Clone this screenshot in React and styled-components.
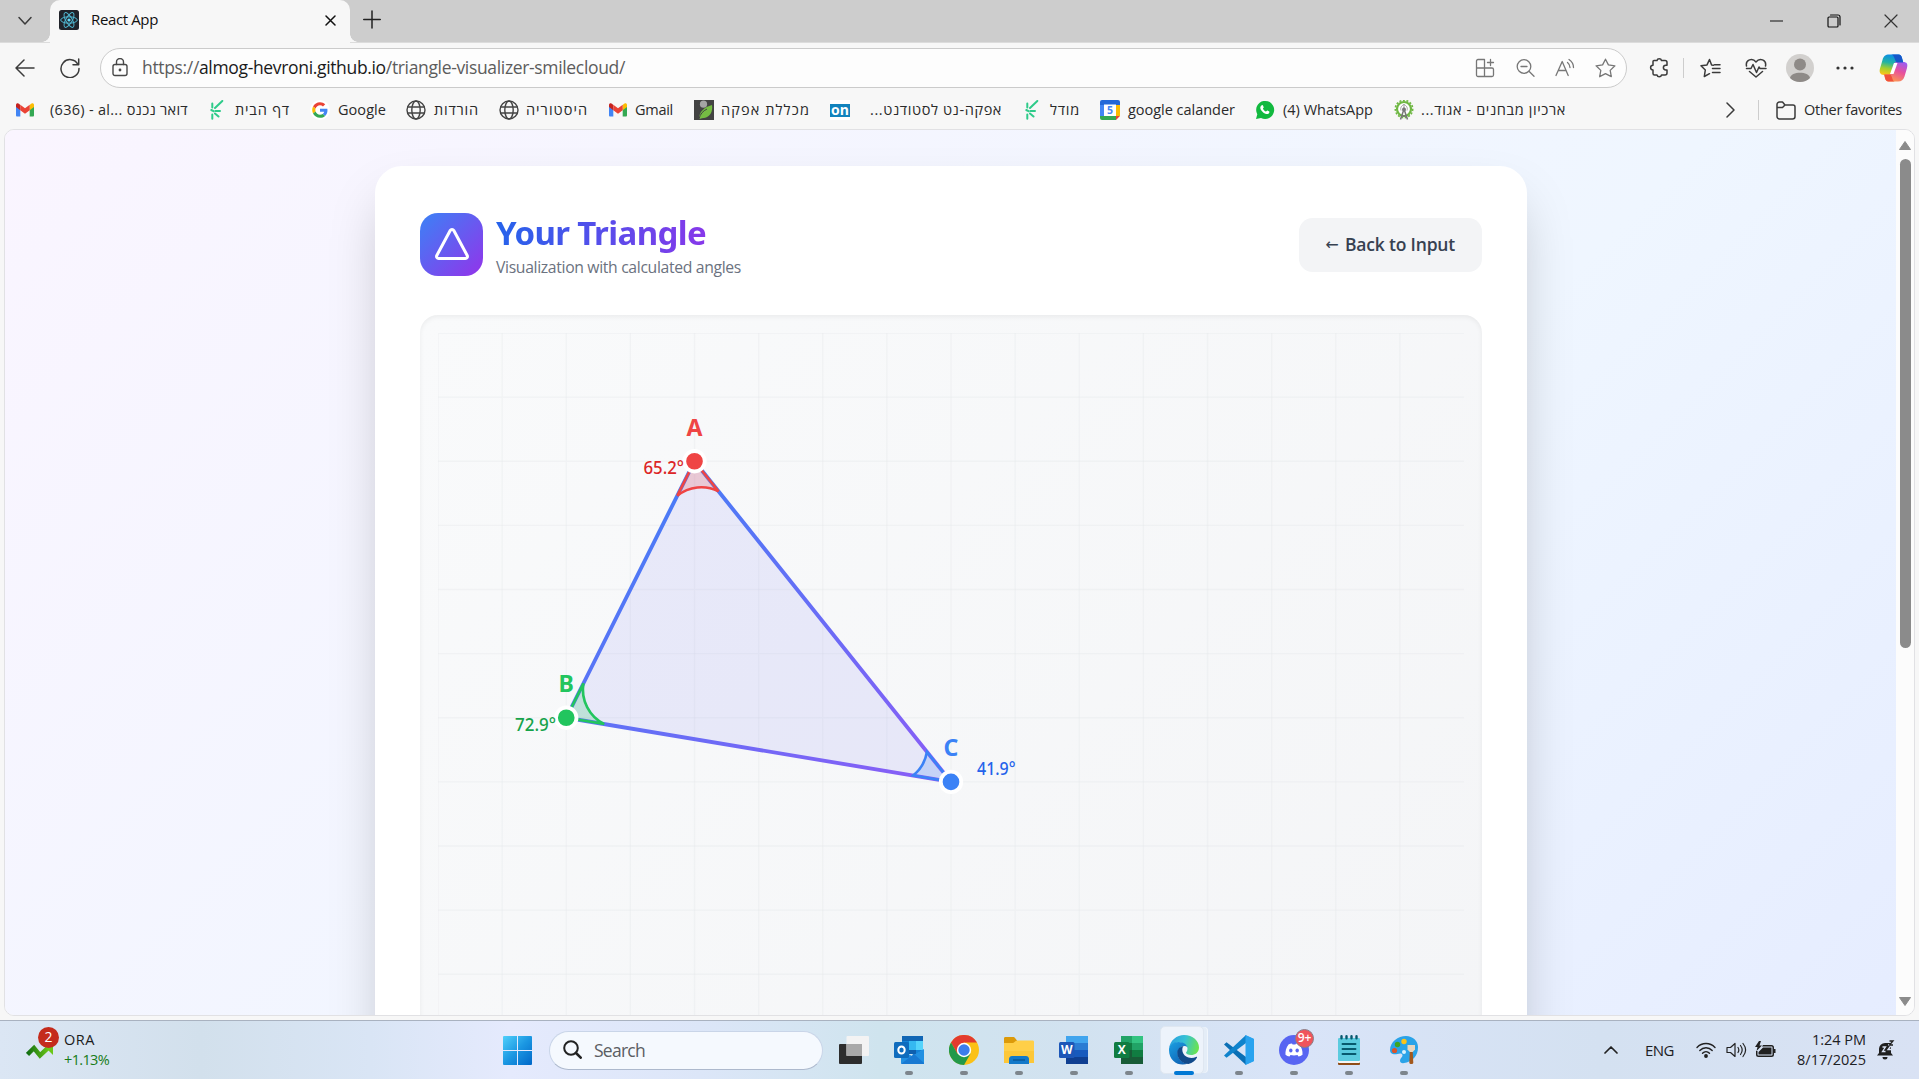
import React, { useLayoutEffect, useRef, useState } from "react";
import styled, { createGlobalStyle } from "styled-components";

const GlobalStyle = createGlobalStyle`
  * { box-sizing: border-box; }
  html, body { margin: 0; padding: 0; overflow: hidden; }
  body { font-family: "Open Sans", "Noto Sans", "Liberation Sans", sans-serif; color: #1b1b1b; }
  svg { display: block; flex: none; }
`;

/* ---------- fitted text ---------- */

const TextLine = styled.span`
  display: block;
  flex: none;
  white-space: nowrap;
  color: inherit;
`;

function FitText({ width, dir = "ltr", children }) {
  const ref = useRef(null);
  const [spacing, setSpacing] = useState(0);
  useLayoutEffect(() => {
    const range = document.createRange();
    range.selectNodeContents(ref.current);
    const natural = range.getBoundingClientRect().width;
    setSpacing((width - natural) / ref.current.textContent.length);
  }, [width]);
  return (
    <TextLine ref={ref} dir={dir} style={{ letterSpacing: `${spacing}px` }}>
      {children}
    </TextLine>
  );
}

/* ---------- window shell ---------- */

const Screen = styled.div`
  width: 1919px;
  height: 1079px;
  display: flex;
  flex-direction: column;
  overflow: hidden;
  background: #f7f7f7;
`;

const Slot = styled.div`
  flex: none;
  width: ${(p) => p.$w}px;
  margin-left: ${(p) => p.$ml || 0}px;
  height: 100%;
  display: flex;
  align-items: center;
  justify-content: center;
`;

const Spacer = styled.div`
  flex: 1;
`;

const TabStrip = styled.div`
  flex: none;
  height: 43px;
  display: flex;
  background: #cdcdcd;
  border-bottom: 1px solid #dcdcdc;
`;

const Tab = styled.div`
  position: relative;
  width: 300px;
  height: 43px;
  padding: 0 14px 3px 9px;
  display: flex;
  align-items: center;
  border-radius: 10px 10px 0 0;
  background: #f7f7f7;
  font-size: 15px;
  color: #111;
  &::before,
  &::after {
    content: "";
    position: absolute;
    bottom: 1px;
    width: 8px;
    height: 8px;
  }
  &::before {
    left: -8px;
    background: radial-gradient(circle at 0 0, transparent 7.5px, #f7f7f7 8px);
  }
  &::after {
    right: -8px;
    background: radial-gradient(circle at 100% 0, transparent 7.5px, #f7f7f7 8px);
  }
`;

const TabTitle = styled.div`
  flex: 1;
  margin-left: 12px;
  padding-bottom: 2px;
`;

const Toolbar = styled.div`
  flex: none;
  height: 49px;
  display: flex;
  align-items: center;
`;

const AddressBar = styled.div`
  width: 1527px;
  height: 40px;
  margin-left: 10px;
  display: flex;
  align-items: center;
  padding-right: 1px;
  border: 1px solid #cbcbcb;
  border-radius: 20px;
  background: #fdfdfd;
`;

const Url = styled.div`
  margin-left: 4px;
  padding-bottom: 1px;
  font-size: 17.5px;
  color: #5c5c5c;
  b {
    font-weight: 400;
    color: #1a1a1a;
  }
`;

const Divider = styled.div`
  flex: none;
  width: 1px;
  height: 20px;
  background: #cdcdcd;
`;

const BookmarkBar = styled.div`
  flex: none;
  height: 37px;
  padding: 0 0 1px 15px;
  display: flex;
  align-items: center;
  font-size: 14.5px;
  color: #2a2a2a;
  ${TextLine} {
    padding-bottom: 1px;
  }
`;

const BookmarkItem = styled.div`
  flex: none;
  width: ${(p) => p.$w}px;
  display: flex;
  align-items: center;
  gap: ${(p) => p.$gap}px;
`;

const OtherFavorites = styled.div`
  display: flex;
  align-items: center;
  gap: 8px;
  margin: 0 17px 0 17px;
`;

/* ---------- page ---------- */

const PageFrame = styled.div`
  flex: none;
  height: 887px;
  margin: 0 4px 4px;
  display: flex;
  overflow: hidden;
  border: 1px solid #e1e1e4;
  border-radius: 10px;
  background: #fcfcfc;
`;

const PageScroll = styled.div`
  flex: 1;
  height: 885px;
  overflow: hidden;
`;

const PageBody = styled.div`
  height: 1527px;
  padding: 36px;
  display: flex;
  justify-content: center;
  align-items: flex-start;
  background: linear-gradient(135deg, #faf5ff 0%, #eff6ff 50%, #e0e7ff 100%);
`;

const Card = styled.main`
  width: 1152px;
  height: 1400px;
  padding: 45px;
  border-radius: 27px;
  background: #fff;
  box-shadow: 0 28px 56px -13px rgba(0, 0, 0, 0.25);
`;

const CardHeader = styled.header`
  display: flex;
  align-items: center;
  height: 68px;
  margin-bottom: 36px;
`;

const Logo = styled.div`
  width: 63px;
  height: 63px;
  margin: 0 13.5px 2px 0;
  padding-left: 1px;
  display: flex;
  align-items: center;
  justify-content: center;
  border-radius: 18px;
  background: linear-gradient(135deg, #3b82f6, #9333ea);
`;

const Title = styled.h1`
  margin: 0;
  width: fit-content;
  font-family: "Noto Sans", sans-serif;
  font-size: 33px;
  line-height: 41px;
  font-weight: 700;
  background: linear-gradient(90deg, #2563eb, #9333ea 112%);
  background-clip: text;
  color: transparent;
`;

const Subtitle = styled.p`
  margin: 3px 0 0;
  font-size: 15.75px;
  line-height: 23px;
  color: #6b7280;
`;

const BackButton = styled.button`
  width: 183px;
  height: 54px;
  padding: 0 0 2px;
  display: flex;
  align-items: center;
  justify-content: center;
  gap: 6px;
  border: 0;
  border-radius: 13.5px;
  background: #f3f4f6;
  color: #374151;
  font: 600 17.5px "Open Sans", "Noto Sans", sans-serif;
`;

const BackArrow = styled.span`
  width: 14px;
  font: 400 16px "DejaVu Sans", sans-serif;
`;

const Panel = styled.section`
  height: 1062px;
  padding: 18px;
  border-radius: 18px;
  background: linear-gradient(135deg, #f9fafb, #f3f4f6);
  box-shadow: inset 0 2px 5px rgba(0, 0, 0, 0.06);
`;

const ScrollTrack = styled.div`
  flex: none;
  width: 18px;
  height: 885px;
  padding: 11px 1px 9px 1px;
  display: flex;
  flex-direction: column;
  align-items: center;
  background: #fcfcfc;
`;

const ScrollThumb = styled.div`
  width: 11px;
  height: 489px;
  margin: 9px 0 auto;
  border-radius: 6px;
  background: #8b8b8b;
`;

/* ---------- taskbar ---------- */

const TaskbarRoot = styled.footer`
  flex: none;
  height: 59px;
  display: flex;
  align-items: center;
  border-top: 1px solid #a9b2c0;
  background: linear-gradient(
    90deg,
    #dbe6f4 0,
    #d2e0ec 200px,
    #d9e5f5 370px,
    #e5eafd 510px,
    #dce6f8 700px,
    #cfe4ee 880px,
    #d2e2f0 1080px,
    #d9e4f8 1300px,
    #d4e1f1 1600px,
    #d9e2f4 1919px
  );
`;

const Widget = styled.div`
  width: 503px;
  height: 58px;
  padding-left: 26px;
  display: flex;
  align-items: center;
`;

const WidgetIcon = styled.div`
  position: relative;
  width: 38px;
  height: 40px;
  padding-top: 13px;
`;

const WidgetBadge = styled.span`
  position: absolute;
  left: 12px;
  top: -3px;
  width: 21px;
  height: 21px;
  border-radius: 50%;
  background: #c42b1c;
  color: #fff;
  font-size: 14px;
  line-height: 20px;
  text-align: center;
`;

const WidgetText = styled.div`
  font-size: 14.5px;
  line-height: 20px;
  span:last-child {
    color: #177c17;
  }
`;

const SearchPill = styled.div`
  width: 274px;
  height: 39px;
  margin: 0 3px 0 17px;
  padding: 0 0 1px 13px;
  display: flex;
  align-items: center;
  gap: 12px;
  border: 1px solid #c9d5e8;
  border-bottom-color: #adb9cd;
  border-radius: 20px;
  background: #f5f9fe;
  font-size: 17.5px;
  color: #5b5e63;
`;

const TaskSlot = styled.div`
  position: relative;
  flex: none;
  width: 55px;
  height: 58px;
  display: flex;
  align-items: center;
  justify-content: center;
`;

const ActiveTile = styled.div`
  width: 44px;
  height: 48px;
  margin-right: 4px;
  padding-left: 5px;
  display: flex;
  align-items: center;
  justify-content: center;
  border: 1px solid #dfe7f1;
  border-radius: 5px;
  background: #edf3fb;
  box-shadow: 4px 0 0 -1px #e4edf7, 5px 0 0 -1px #f1f6fc;
`;

const Indicator = styled.i`
  position: absolute;
  bottom: 4px;
  left: 50%;
  width: ${(p) => (p.$active ? 20 : 8)}px;
  height: 4px;
  transform: translateX(-50%);
  border-radius: 2px;
  background: ${(p) => (p.$active ? "#0078d4" : "#7d858c")};
`;

const CountBadge = styled.span`
  position: absolute;
  right: 7px;
  top: 8px;
  width: 19px;
  height: 19px;
  border-radius: 50%;
  border: 1px solid #8a7d86;
  background: #f0545b;
  color: #fff;
  font-size: 12px;
  font-weight: 600;
  line-height: 16px;
  text-align: center;
`;

const Tray = styled.div`
  display: flex;
  align-items: center;
  height: 58px;
  font-size: 15px;
  color: #1d2024;
`;

const Clock = styled.div`
  width: 90px;
  margin-right: 11px;
  padding-bottom: 1px;
  display: flex;
  flex-direction: column;
  align-items: flex-end;
  font-size: 14.5px;
  line-height: 19.5px;
`;

/* ---------- icons ---------- */

function Stroke({ w = 20, h = 20, vb, c = "#3b3b3b", sw = 1.5, children }) {
  return (
    <svg width={w} height={h} viewBox={vb || `0 0 ${w} ${h}`} fill="none" stroke={c} strokeWidth={sw} strokeLinecap="round" strokeLinejoin="round">
      {children}
    </svg>
  );
}

const ReactIcon = () => (
  <svg width="20" height="20" viewBox="0 0 20 20">
    <rect width="20" height="20" rx="2.5" fill="#20232a" />
    <g fill="none" stroke="#4fb6d0" strokeWidth="1">
      <ellipse cx="10" cy="10" rx="8.3" ry="3.2" />
      <ellipse cx="10" cy="10" rx="8.3" ry="3.2" transform="rotate(60 10 10)" />
      <ellipse cx="10" cy="10" rx="8.3" ry="3.2" transform="rotate(120 10 10)" />
    </g>
    <circle cx="10" cy="10" r="1.6" fill="#61dafb" />
  </svg>
);

const GmailIcon = () => (
  <svg width="20" height="20" viewBox="0 0 20 20">
    <path d="M1 5v10.3c0 .8.5 1.2 1.200 1.200H5.300V8.500z" fill="#4285f4" />
    <path d="M19 5v10.300c0 .8-.5 1.200-1.200 1.200H14.700V8.500z" fill="#34a853" />
    <path d="M14.700 5v5.200L19 7V5c0-1.800-1.800-2.300-3-1.300z" fill="#fbbc04" />
    <path d="M5.300 5v5.200L1 7V5c0-1.800 1.800-2.300 3-1.300z" fill="#c5221f" />
    <path d="M5.300 10.200V4.700L10 8.300l4.700-3.600v5.500L10 13.800z" fill="#ea4335" />
  </svg>
);

const SparkIcon = () => (
  <svg width="20" height="20" viewBox="0 0 20 20" fill="none" stroke="#2ecb8a" strokeWidth="2" strokeLinecap="round">
    <path d="M8 8 15.300 1M5.300 3.500v4M5.300 14.500v4.300M4.300 10l2.200 1.200M8.500 11h4.500M8 13.500l3.500 3" />
  </svg>
);

const GoogleIcon = () => (
  <svg width="20" height="20" viewBox="0 0 20 20">
    <circle cx="10" cy="10" r="10" fill="#fff" />
    <g transform="translate(2.200 2.200) scale(.325)">
      <path fill="#ea4335" d="M24 9.500c3.500 0 6.700 1.200 9.200 3.600l6.900-6.900C35.900 2.400 30.500 0 24 0 14.600 0 6.500 5.400 2.600 13.200l8 6.200C12.400 13.700 17.700 9.500 24 9.500z" />
      <path fill="#4285f4" d="M47 24.500c0-1.600-.2-3.100-.4-4.500H24v9h12.900c-.6 3-2.300 5.500-4.800 7.200l7.700 6C44.400 38 47 31.800 47 24.500z" />
      <path fill="#fbbc05" d="M10.500 28.600c-.5-1.500-.8-3-.8-4.600s.3-3.100.8-4.600l-8-6.200C.9 16.500 0 20.100 0 24s.9 7.500 2.600 10.800z" />
      <path fill="#34a853" d="M24 48c6.500 0 11.900-2.100 15.900-5.800l-7.700-6c-2.200 1.500-4.900 2.300-8.200 2.300-6.300 0-11.600-4.200-13.500-9.900l-8 6.200C6.500 42.600 14.600 48 24 48z" />
    </g>
  </svg>
);

const GlobeIcon = () => (
  <Stroke sw={1.400} c="#444">
    <circle cx="10" cy="10" r="9" />
    <ellipse cx="10" cy="10" rx="4.200" ry="9" />
    <path d="M1.700 7h16.600M1.700 13h16.600" />
  </Stroke>
);

const AfekaIcon = () => (
  <svg width="20" height="20" viewBox="0 0 20 20">
    <rect width="20" height="20" fill="#434343" />
    <circle cx="9.500" cy="4.200" r="3.600" fill="#a4a4a4" />
    <path d="M18 5c1 7-2 12-8 13-3 .5-5 1-5 1 0-7 5-12 13-14z" fill="#76bd43" />
    <path d="M5 19c1-5 4-8 8-10" stroke="#434343" fill="none" />
  </svg>
);

const OnMark = styled.span`
  flex: none;
  width: 20px;
  height: 20px;
  border: solid #fff;
  border-width: 4px 0 3px;
  background: #1283bd;
  color: #fff;
  font-size: 14px;
  font-weight: 700;
  line-height: 11px;
  text-align: center;
`;

const CalendarIcon = () => (
  <svg width="20" height="20" viewBox="0 0 20 20">
    <path d="M0 2a2 2 0 0 1 2-2h16a2 2 0 0 1 2 2v3H0z" fill="#2468d8" />
    <path d="M0 5h4v11H0z" fill="#4285f4" />
    <path d="M16 5h4v11h-4z" fill="#fbbc04" />
    <path d="M0 16h16v4H2a2 2 0 0 1-2-2z" fill="#34a853" />
    <path d="M16 16h4l-4 4z" fill="#ea4335" />
    <path d="M4 4.500h12V16H4z" fill="#fff" />
    <text x="10" y="14" fontSize="10.500" fontWeight="700" fill="#4285f4" textAnchor="middle">5</text>
  </svg>
);

const WhatsAppIcon = () => (
  <svg width="20" height="20" viewBox="0 0 20 20">
    <path d="M1 19l1.300-4.700A9 9 0 1 1 6 17.900z" fill="#12b93f" />
    <path d="M6.500 5.500c.7-.7 1.300-.5 1.600.3l.6 1.500c0 .6-.8 1-.7 1.400.7 1.400 1.700 2.300 3 2.900.5 0 .9-1.200 1.500-1l1.800.9c.4.5-.1 2-1.300 2.500-2.800.8-7.500-3-7.700-6.300 0-1 .5-1.700 1.200-2.200z" fill="#fff" />
  </svg>
);

const WheelIcon = () => (
  <svg width="20" height="20" viewBox="0 0 20 20">
    <circle cx="10" cy="9" r="7" fill="#fff" stroke="#6fb743" strokeWidth="2.200" />
    <circle cx="10" cy="9" r="8.700" fill="none" stroke="#6fb743" strokeWidth="1.600" strokeDasharray="2 1.600" />
    <path d="M6.500 19.500 10 9l3.500 10.500M8 16h4" fill="none" stroke="#777" strokeWidth="1.500" />
    <path d="M10 4.500c-2.500 1-4 3.500-3 6M10 4.500c2.500 1 4 3.500 3 6M10 4v6" fill="none" stroke="#999" strokeWidth=".9" />
    <circle cx="10" cy="9.500" r="2" fill="#777" />
  </svg>
);

const CopilotIcon = () => (
  <svg width="29" height="28" viewBox="0 0 29 28">
    <defs>
      <linearGradient id="cpA" x1=".5" y1="0" x2=".3" y2="1">
        <stop offset="0" stopColor="#0a8bea" />
        <stop offset=".4" stopColor="#22b3a4" />
        <stop offset=".7" stopColor="#a5cf2d" />
        <stop offset="1" stopColor="#fcc419" />
      </linearGradient>
      <linearGradient id="cpB" x1=".8" y1="0" x2=".3" y2="1">
        <stop offset="0" stopColor="#9b5cf2" />
        <stop offset=".45" stopColor="#e8509c" />
        <stop offset="1" stopColor="#ff9f4a" />
      </linearGradient>
    </defs>
    <path d="M16 .5h3.500c2 0 3 1.500 3.500 3.500l1.300 4.500h-3.800c-1.500 0-2.300.7-2.800 2.500l-2 7c-.8 2.800-2 3-4.200 3H5C1 21 0 18 1 14.500L3.500 6C4.600 2 6.500.5 10 .5z" fill="url(#cpA)" />
    <path d="M13 27.500H9.500c-2 0-3-1.500-3.500-3.500L5.200 20.500h4.300c1.500 0 2.300-.7 2.800-2.500l2-7c.8-2.800 2-3 4.200-3H24c4 0 5 2 4 6l-2.500 8.500c-1.100 3.500-3 5-6.500 5z" fill="url(#cpB)" />
    <path d="M12 .5h7.500c2 0 3 1.500 3.500 3.500l1.300 4.500h-5.800C15.500 8.500 16 .5 12 .5z" fill="#1656c9" />
    <path d="M5.200 20.500h5.300c3 0 2.300 7 5.500 7H9.500c-2 0-3-1.500-3.500-3.500z" fill="#f0503c" />
    <path d="M15 9h3.500l-4 11H11z" fill="#fff" />
  </svg>
);

const Avatar = () => (
  <svg width="28" height="28" viewBox="0 0 28 28">
    <circle cx="14" cy="14" r="14" fill="#d2d0ce" />
    <circle cx="14" cy="10.500" r="6" fill="#8e8a87" />
    <path d="M4 24c1-7 19-7 20 0-5 5.300-15 5.300-20 0z" fill="#8e8a87" />
  </svg>
);

const WindowsIcon = () => (
  <svg width="29" height="29" viewBox="0 0 29 29">
    <defs>
      <linearGradient id="win" x1="0" y1="0" x2="1" y2="1">
        <stop offset="0" stopColor="#50d0fb" />
        <stop offset=".5" stopColor="#1b97e2" />
        <stop offset="1" stopColor="#0067c8" />
      </linearGradient>
    </defs>
    <path d="M1 0h13v14H0V1a1 1 0 0 1 1-1zM15 0h13a1 1 0 0 1 1 1v13H15zM0 15h14v14H1a1 1 0 0 1-1-1zM15 15h14v13a1 1 0 0 1-1 1H15z" fill="url(#win)" />
  </svg>
);

const TaskViewIcon = () => (
  <svg width="30" height="28" viewBox="0 0 30 28">
    <rect x="0" y="8" width="23" height="20" rx="1" fill="#2d2d2d" />
    <rect x="7.500" y="0" width="22.500" height="20" rx="1" fill="#f3f3f3" />
    <path d="M7.500 8H23v12H7.500z" fill="#a9a9a9" />
  </svg>
);

const OutlookIcon = () => (
  <svg width="30" height="28" viewBox="0 0 30 28">
    <path d="M8 0h21v14H8z" fill="#1066b5" />
    <path d="M8 5h7v6H8z" fill="#1482d8" />
    <path d="M15 5h7v9h-7z" fill="#35b8f1" />
    <path d="M22 5h7v9h-7z" fill="#54d3fb" />
    <path d="M15 14h14l-9 6z" fill="#1482d8" />
    <path d="M15 14h7v4h-7z" fill="#0e5fae" />
    <path d="M30 13v14a1 1 0 0 1-1 1H8a1 1 0 0 1-1-1V14l11 6z" fill="#2290e2" />
    <path d="M7 28 20 18l10 9v1z" fill="#1879d2" />
    <rect x="0" y="6" width="15" height="16" rx="1.500" fill="#0f6cbd" />
    <ellipse cx="7.500" cy="14" rx="3.200" ry="3.600" fill="none" stroke="#fff" strokeWidth="2" />
  </svg>
);

const ChromeIcon = () => (
  <svg width="30" height="30" viewBox="0 0 30 30">
    <circle cx="15" cy="15" r="15" fill="#fbc116" />
    <path d="M2 7.500a15 15 0 0 1 26 0H15L8.500 18.750z" fill="#e33b2e" />
    <path d="M2 7.500A15 15 0 0 0 15 30l6.500-11.250H8.500z" fill="#23994a" />
    <circle cx="15" cy="15" r="7.200" fill="#fff" />
    <circle cx="15" cy="15" r="5.700" fill="#3b7ded" />
  </svg>
);

const ExplorerIcon = () => (
  <svg width="30" height="27" viewBox="0 0 30 27">
    <path d="M0 1.500C0 .5.500 0 1.500 0H9c1 0 1.500.3 2 1l2 2.500V8H0z" fill="#dc9a0a" />
    <path d="M0 6h9c1.500 0 2-2.500 4-2.500h15.500c1 0 1.500.5 1.500 1.500v21H0z" fill="#ffcf48" />
    <path d="M0 14h30v12H0z" fill="#fcc22f" opacity=".6" />
    <path d="M5 27v-5c0-1.500 1-3 3-3h14c2 0 3 1.500 3 3v5z" fill="#1379c9" />
    <path d="M9 23h12" stroke="#0a4f8e" strokeWidth="1.200" />
  </svg>
);

function OfficeIcon({ tones, plate, children }) {
  return (
    <svg width="30" height="28" viewBox="0 0 30 28">
      {tones.map((t, i) => (
        <rect key={i} x={t[1]} y={t[2]} width={t[3]} height={7.100} fill={t[0]} />
      ))}
      <rect x="0" y="6" width="15.500" height="16" rx="1.500" fill={plate} />
      <text x="7.700" y="18.300" textAnchor="middle" fontSize="12" fontWeight="700" fill="#fff">{children}</text>
    </svg>
  );
}

const EdgeIcon = () => (
  <svg width="30" height="30" viewBox="0 0 30 30">
    <defs>
      <linearGradient id="edT" x1="0" y1=".3" x2="1" y2=".5">
        <stop offset="0" stopColor="#2a9ee0" />
        <stop offset=".5" stopColor="#35c1d6" />
        <stop offset="1" stopColor="#6ae34f" />
      </linearGradient>
      <linearGradient id="edL" x1="0" y1="0" x2=".7" y2="1">
        <stop offset="0" stopColor="#1ba0e2" />
        <stop offset="1" stopColor="#0f62b4" />
      </linearGradient>
    </defs>
    <path d="M0 14C1 5 8 0 15 0c9 0 15 6 15 12.500 0 5-4 7.500-8 7.500-3 0-5-1-5-2.200 0-.8 1.500-1.500 1.500-4C18.500 10 14 7.500 10 7.500 5 7.500 1 10 0 14z" fill="url(#edT)" />
    <path d="M0 15C0 10 4 7 9.500 7 15 7 18 10 18.300 12c-2-2-8-1-9.300 4-1.500 6 3 12.500 10 12.500C11 32 0 27 0 15z" fill="url(#edL)" />
    <path d="M14.500 11c-5 1-7 4.500-6 9 1.300 5.500 6 9 11 9 4-1 7-3.500 8.500-6.500.3-.7-.3-1-1-.6-5 2.500-12 .5-13.500-5.400-.5-2.500 0-4.500 1-5.500z" fill="#114a8b" />
  </svg>
);

const VsCodeIcon = () => (
  <svg width="30" height="30" viewBox="0 0 30 30">
    <path d="M0 9.500 2.500 7.300 22 22v8z" fill="#0a6fb5" />
    <path d="M0 20.500l2.500 2.200L22 8V0z" fill="#0f83cc" />
    <path d="M21 0l8 3.500c.6.300 1 .8 1 1.500v20c0 .7-.4 1.200-1 1.500L21 30c1 0 1.300-.7 1.300-1.500V1.500C22.300.7 22 0 21 0z" fill="#2aa7f2" />
    <path d="M21.500 0 30 4v22l-8.500 4z" fill="#29a3ef" />
  </svg>
);

const DiscordIcon = () => (
  <svg width="30" height="30" viewBox="0 0 30 30">
    <circle cx="15" cy="15" r="15" fill="#5865f2" />
    <path d="M9.500 9.500c1-.6 2.500-1 3.500-1.100l.6 1.200c1-.1 1.800-.1 2.800 0l.6-1.200c1.200.2 2.500.5 3.500 1.100 2.300 3.200 3.300 6.500 3 10.300-1.300 1-2.700 1.500-4 1.800l-1-1.500c-2.300.6-4.700.6-7 0l-1 1.500c-1.500-.3-2.800-.9-4-1.800-.3-3.500.6-7.300 3-10.300z" fill="#fff" />
    <ellipse cx="11.800" cy="15.500" rx="1.700" ry="1.900" fill="#5865f2" />
    <ellipse cx="18.200" cy="15.500" rx="1.700" ry="1.900" fill="#5865f2" />
  </svg>
);

const NotepadIcon = () => (
  <svg width="22" height="30" viewBox="0 0 22 30">
    <rect x="0" y="26" width="22" height="4" rx="1" fill="#8f4d18" />
    <rect x="0" y="3" width="22" height="25" rx="1" fill="#f5f5f5" />
    <rect x="0" y="3" width="22" height="23" rx="1" fill="#5bcbdf" />
    <g stroke="#07596e" strokeWidth="1.900" strokeLinecap="round">
      <path d="M4.500 9h13M4.500 14h13M4.500 19h13" />
      <path d="M3.500 1.200v2M8.500 1.200v2M13.500 1.200v2M18.500 1.200v2" strokeWidth="2.400" />
    </g>
  </svg>
);

const PaintIcon = () => (
  <svg width="28" height="28" viewBox="0 0 28 28">
    <path d="M16 0c7 0 12 5 12 11 0 10-6 13-10 15-4 1.500-8 2-8-1.500 0-2.500 2.500-3 2.500-5 0-2.500-3-2-5-1.500-4 .8-7.500 0-7.500-4C0 6 8 0 16 0z" fill="#2aa3e8" />
    <circle cx="14" cy="5.500" r="2.700" fill="#fcc419" />
    <circle cx="7.500" cy="8.500" r="2.700" fill="#3da523" />
    <circle cx="4.500" cy="14.500" r="2.600" fill="#d9542b" />
    <circle cx="14" cy="16" r="2" fill="#d7f1fd" />
    <path d="M17.500 9h7.500v4.500l-2.300 2.500h-2.900l-2.300-2.500z" fill="#e8d6bf" />
    <path d="M19.800 16h2.900l.6 10.500c0 2-4 2-4 0z" fill="#a3591d" />
  </svg>
);

const StocksIcon = () => (
  <svg width="28" height="16" viewBox="0 0 28 16">
    <defs>
      <linearGradient id="stk" x1="0" x2="1">
        <stop offset="0" stopColor="#126f12" />
        <stop offset="1" stopColor="#6bc718" />
      </linearGradient>
    </defs>
    <path d="M1.500 11.500 8 5l6 7.500L23 4" fill="none" stroke="url(#stk)" strokeWidth="4.500" />
    <path d="M16 1h11v11z" fill="#6bc718" />
  </svg>
);

/* ---------- triangle ---------- */

const SCALE = 800 / 1026;
const gridSteps = Array.from({ length: 16 }, (_, i) => i * 50);
const vertices = [
  { id: "A", x: 200, y: 100, color: "#ef4444", dark: "#dc2626", angle: "65.2°", lx: 176, ly: 110, lw: 40.5, next: [[100, 300], [400, 350]], sweep: 1 },
  { id: "B", x: 100, y: 300, color: "#22c55e", dark: "#16a34a", angle: "72.9°", lx: 76, ly: 310.500, lw: 41, next: [[200, 100], [400, 350]], sweep: 0 },
  { id: "C", x: 400, y: 350, color: "#3b82f6", dark: "#2563eb", angle: "41.9°", lx: 435.300, ly: 344.500, lw: 38.500, next: [[200, 100], [100, 300]], sweep: 1 },
];

function towards(v, [x, y], r = 30) {
  const d = Math.hypot(x - v.x, y - v.y);
  return `${v.x + ((x - v.x) * r) / d} ${v.y + ((y - v.y) * r) / d}`;
}

const TriangleCanvas = styled.svg`
  font-family: "Noto Sans", sans-serif;
`;

const TriangleChart = () => (
  <TriangleCanvas width="1026" height="1026" viewBox="0 0 800 800">
    <defs>
      <linearGradient id="edge" x1="0" y1="0" x2="1" y2="1">
        <stop offset="0" stopColor="#3b82f6" />
        <stop offset="1" stopColor="#8b5cf6" />
      </linearGradient>
    </defs>
    <g stroke="#e5e7eb" strokeOpacity=".38" strokeWidth="1">
      {gridSteps.map((n) => (
        <path key={n} d={`M${n} 0V800M0 ${n}H800`} />
      ))}
    </g>
    <polygon points="200,100 100,300 400,350" fill="#6366f1" fillOpacity=".1" stroke="url(#edge)" strokeWidth="3" strokeLinejoin="round" />
    {vertices.map((v) => (
      <path
        key={v.id}
        d={`M${v.x} ${v.y}L${towards(v, v.next[0])}A30 30 0 0 ${v.sweep} ${towards(v, v.next[1])}Z`}
        fill={v.color}
        fillOpacity=".2"
        stroke={v.color}
        strokeWidth="2"
      />
    ))}
    {vertices.map((v) => (
      <g key={v.id}>
        <circle cx={v.x} cy={v.y} r="8" fill={v.color} stroke="#fff" strokeWidth="3" />
        <text x={v.x} y={v.y - 20} textAnchor="middle" fontSize="18" fontWeight="700" fill={v.color}>{v.id}</text>
        <text x={v.lx} y={v.ly} textAnchor="middle" fontSize="13.700" fontWeight="500" fill={v.dark} textLength={v.lw * SCALE} lengthAdjust="spacingAndGlyphs">{v.angle}</text>
      </g>
    ))}
  </TriangleCanvas>
);

/* ---------- sections ---------- */

const bookmarks = [
  { icon: <GmailIcon />, text: "(636) - al... דואר נכנס", w: 192, gap: 15, tw: 138 },
  { icon: <SparkIcon />, text: "דף הבית", w: 103, gap: 8, tw: 55, dir: "rtl" },
  { icon: <GoogleIcon />, text: "Google", w: 96, gap: 8, tw: 48 },
  { icon: <GlobeIcon />, text: "הורדות", w: 93, gap: 8, tw: 45, dir: "rtl" },
  { icon: <GlobeIcon />, text: "היסטוריה", w: 109, gap: 7, tw: 62, dir: "rtl" },
  { icon: <GmailIcon />, text: "Gmail", w: 86, gap: 7, tw: 38 },
  { icon: <AfekaIcon />, text: "מכללת אפקה", w: 136, gap: 7, tw: 89, dir: "rtl" },
  { icon: <OnMark>on</OnMark>, text: "אפקה-נט לסטודנט...", w: 192, gap: 20, tw: 132, dir: "rtl" },
  { icon: <SparkIcon />, text: "מודל", w: 78, gap: 8, tw: 30, dir: "rtl" },
  { icon: <CalendarIcon />, text: "google calander", w: 155, gap: 8, tw: 107 },
  { icon: <WhatsAppIcon />, text: "(4) WhatsApp", w: 139, gap: 8, tw: 90 },
  { icon: <WheelIcon />, text: "ארכיון מבחנים - אגוד...", w: 200, gap: 7, tw: 145, dir: "rtl" },
];

const tasks = [
  { id: "view", icon: <TaskViewIcon />, idle: true },
  { id: "outlook", icon: <OutlookIcon /> },
  { id: "chrome", icon: <ChromeIcon /> },
  { id: "files", icon: <ExplorerIcon /> },
  { id: "word", icon: <OfficeIcon plate="#1d57b8" tones={[["#41a5ee", 7, 0, 22], ["#2b7cd3", 7, 7, 22], ["#185abd", 7, 14, 22], ["#103f91", 7, 21, 22]]}>W</OfficeIcon> },
  { id: "excel", icon: <OfficeIcon plate="#107c41" tones={[["#21a366", 7, 0, 11], ["#33c481", 18, 0, 11], ["#107c41", 7, 7, 11], ["#21a366", 18, 7, 11], ["#185c37", 7, 14, 11], ["#107c41", 18, 14, 11], ["#185c37", 7, 21, 22]]}>X</OfficeIcon> },
  { id: "edge", icon: <EdgeIcon />, active: true },
  { id: "code", icon: <VsCodeIcon /> },
  { id: "discord", icon: <DiscordIcon />, count: "9+" },
  { id: "notes", icon: <NotepadIcon /> },
  { id: "paint", icon: <PaintIcon /> },
];

const Tabs = () => (
  <TabStrip>
    <Slot $w={50}><Stroke w={16} h={10}><path d="M2 1.500l6 6.500 6-6.500" /></Stroke></Slot>
    <Tab>
      <ReactIcon />
      <TabTitle><FitText width={67}>React App</FitText></TabTitle>
      <Stroke w={11} h={11} c="#111"><path d="M1 1l9 9M10 1l-9 9" /></Stroke>
    </Tab>
    <Slot $w={44}><Stroke w={18} h={22} c="#222"><path d="M9 1v17M.700 9.500h16.600" /></Stroke></Slot>
    <Spacer />
    <Slot $w={57}><Stroke w={13} h={13} c="#111" sw={1.200}><path d="M0 6h13" /></Stroke></Slot>
    <Slot $w={57}><Stroke w={14} h={14} c="#111" sw={1.200}><rect x="1" y="3" width="10" height="10" rx="1" /><path d="M3.500 1h7.500a2 2 0 0 1 2 2v8" /></Stroke></Slot>
    <Slot $w={57}><Stroke w={14} h={14} c="#333" sw={1.200}><path d="M1 1l12 12M13 1L1 13" /></Stroke></Slot>
  </TabStrip>
);

const Navigation = () => (
  <Toolbar>
    <Slot $w={50}><Stroke w={20} h={18}><path d="M19 9H1M9 1L1 9l8 8" /></Stroke></Slot>
    <Slot $w={40}><Stroke w={20} h={20}><path d="M18 6.500A9 9 0 1 0 19 10.500M18.700 1v5.700H13" /></Stroke></Slot>
    <AddressBar>
      <Slot $w={37}>
        <Stroke w={16} h={19} sw={1.400} c="#484848"><rect x="1" y="6.500" width="14" height="11" rx="2" /><path d="M4.500 6.500V4a3.500 3.500 0 0 1 7 0v2.500" /><circle cx="8" cy="12" r=".7" fill="#484848" /></Stroke>
      </Slot>
      <Url><FitText width={483}>https://<b>almog-hevroni.github.io</b>/triangle-visualizer-smilecloud/</FitText></Url>
      <Spacer />
      <Slot $w={40}><Stroke w={20} h={20} c="#777" sw={1.300}><path d="M9.500 10H1.500V3A1.500 1.500 0 0 1 3 1.500h6.500v17H3A1.500 1.500 0 0 1 1.500 17v-7M9.500 10H17a1.500 1.500 0 0 1 1.500 1.500V17a1.500 1.500 0 0 1-1.500 1.500H9.500M15.500 1.500v6M12.500 4.500h6" /></Stroke></Slot>
      <Slot $w={40}><Stroke w={19} h={20} c="#777" sw={1.300}><circle cx="8" cy="8.500" r="6.800" /><path d="M5 8.500h6M13 13.300l5 5" /></Stroke></Slot>
      <Slot $w={40}><Stroke w={20} h={20} c="#777" sw={1.300}><path d="M1 17.500L7.200 3.500l6 14M3.200 12.500h8M12.500 4.500c1.600 1.300 2.500 3 2.500 5M14 1.500c2.900 2 4.500 4.800 4.500 8" /></Stroke></Slot>
      <Slot $w={40}><Stroke w={21} h={20} c="#777" sw={1.300}><path d="M10.500 1.200l2.900 5.700 6.500.9-4.700 4.600 1.100 6.300-5.800-3-5.800 3 1.100-6.300L1.100 7.800l6.500-.9z" /></Stroke></Slot>
    </AddressBar>
    <Slot $w={46} $ml={9}>
      <Stroke w={20} h={21}><path d="M5 3.500h3a2.300 2.300 0 0 1 4.500 0H16a2 2 0 0 1 2 2V8.200h-1.200a2.400 2.400 0 0 0 0 4.800H18v3a2 2 0 0 1-2 2h-3.500a2.300 2.300 0 0 1-4.500 0H5.500a1.500 1.500 0 0 1-1.500-1.500V13a2.400 2.400 0 0 1 0-4.800V4.500a1 1 0 0 1 1-1z" /></Stroke>
    </Slot>
    <Slot $w={1} />
    <Divider />
    <Slot $w={46} $ml={3}><Stroke w={21} h={20}><path d="M13.500 7.200l-1.900-.3L9.500 1.500 7 6.900l-6 .9 4.300 4.200-1 6.500 5.200-2.800M12.500 10.500h7.500M14.500 6.800H20M12.500 14.500h7.500" /></Stroke></Slot>
    <Slot $w={45}><Stroke w={22} h={20}><path d="M1.500 8C.200 1.500 7.500-.5 11 4c3.500-4.500 10.800-2.500 9.500 4M1.500 10.500H6l2-4 3.500 8L14 9l1 1.500h6M4.500 13.500l6.500 5.500 6.500-5.500" /></Stroke></Slot>
    <Slot $w={44}><Avatar /></Slot>
    <Slot $w={46}><svg width="18" height="4" viewBox="0 0 18 4" fill="#333"><circle cx="2" cy="2" r="1.600" /><circle cx="9" cy="2" r="1.600" /><circle cx="16" cy="2" r="1.600" /></svg></Slot>
    <Slot $w={50}><CopilotIcon /></Slot>
  </Toolbar>
);

const Bookmarks = () => (
  <BookmarkBar>
    {bookmarks.map((b, i) => (
      <BookmarkItem key={i} $w={b.w} $gap={b.gap}>
        {b.icon}
        <FitText width={b.tw} dir={b.dir}>{b.text}</FitText>
      </BookmarkItem>
    ))}
    <Spacer />
    <Slot $w={9}><Stroke w={9} h={16}><path d="M1 1l7 7-7 7" /></Stroke></Slot>
    <Slot $w={23} />
    <Divider />
    <OtherFavorites>
      <Stroke w={20} h={19}><path d="M1 15.500v-12A2.500 2.500 0 0 1 3.500 1h3L9 4h8a2 2 0 0 1 2 2v9.500a2.500 2.500 0 0 1-2.500 2.500h-13A2.500 2.500 0 0 1 1 15.500zM1 6.500h5.500L9 4" /></Stroke>
      <FitText width={98}>Other favorites</FitText>
    </OtherFavorites>
  </BookmarkBar>
);

const Taskbar = () => (
  <TaskbarRoot>
    <Widget>
      <WidgetIcon>
        <StocksIcon />
        <WidgetBadge>2</WidgetBadge>
      </WidgetIcon>
      <WidgetText>
        <FitText width={31}>ORA</FitText>
        <FitText width={45}>+1.13%</FitText>
      </WidgetText>
    </Widget>
    <WindowsIcon />
    <SearchPill>
      <Stroke w={19} h={19} c="#222" sw={2}><circle cx="8" cy="8" r="6.800" /><path d="M13 13l4.700 4.700" strokeWidth="2.600" /></Stroke>
      <FitText width={51}>Search</FitText>
    </SearchPill>
    {tasks.map((t) => (
      <TaskSlot key={t.id}>
        {t.active ? <ActiveTile>{t.icon}</ActiveTile> : t.icon}
        {t.count && <CountBadge>{t.count}</CountBadge>}
        {!t.idle && <Indicator $active={t.active} />}
      </TaskSlot>
    ))}
    <Spacer />
    <Tray>
      <Slot $w={14}><Stroke w={14} h={8} c="#222" sw={1.700}><path d="M1 7l6-6 6 6" /></Stroke></Slot>
      <Slot $w={29} $ml={27}><FitText width={29}>ENG</FitText></Slot>
      <Slot $w={20} $ml={22}><Stroke w={20} h={16} c="#222" sw={1.400}><path d="M1 5.500c5-5.300 13-5.300 18 0M3.800 8.500c3.500-3.700 8.900-3.700 12.400 0M6.500 11.300c2-2 5-2 7 0" /><circle cx="10" cy="14" r="1.200" fill="#222" /></Stroke></Slot>
      <Slot $w={21} $ml={10}><Stroke w={21} h={18} c="#222" sw={1.200}><path d="M1 6.500h3.500L9 2.500v13l-4.500-4H1zM12 6.500c1 1.500 1 3.500 0 5M14.500 4.500c2 2.700 2 6.300 0 9M17 2.500c3.200 4 3.200 9 0 13" /></Stroke></Slot>
      <Slot $w={21} $ml={8}>
        <svg width="21" height="18" viewBox="0 0 21 18" fill="#202020"><path d="M8 4h8.500A2.500 2.500 0 0 1 19 6.500V8h1.500v4H19v1.500a2.500 2.500 0 0 1-2.500 2.500h-13A2.500 2.500 0 0 1 1 13.500V10h1.500v3.500c0 .6.400 1 1 1h13c.6 0 1-.4 1-1v-7c0-.6-.4-1-1-1H7z" /><path d="M8 6.500h8.500v7h-13V11zM4 0 0 6h2.500L1.500 10 7 4.500H4.500L6 0z" /></svg>
      </Slot>
      <Clock>
        <FitText width={54}>1:24 PM</FitText>
        <FitText width={69}>8/17/2025</FitText>
      </Clock>
      <svg width="18" height="20" viewBox="0 0 18 20"><path d="M2 13V9a6 6 0 0 1 6-6h6v10l2 2.500H0zM5.500 17h5a2.500 2.500 0 0 1-5 0z" fill="#202020" /><path d="M5.500 7h3l-3 4.500h3M11 5h3.500L11 9.500h3.500" stroke="#dbe3f4" strokeWidth="1.300" fill="none" /><path d="M12.500 1H16l-3.500 4H16" stroke="#202020" strokeWidth="1.300" fill="none" /></svg>
      <Slot $w={24} />
    </Tray>
  </TaskbarRoot>
);

export default function App() {
  return (
    <Screen>
      <GlobalStyle />
      <Tabs />
      <Navigation />
      <Bookmarks />
      <PageFrame>
        <PageScroll>
          <PageBody>
            <Card>
              <CardHeader>
                <Logo>
                  <Stroke w={36} h={36} vb="0 0 36 36" c="#fff" sw={3}><path d="M16.200 4.500 2.800 29.500c-.7 1.500.2 3 1.800 3h26.800c1.600 0 2.500-1.500 1.800-3L19.800 4.500c-.8-1.400-2.800-1.400-3.600 0z" /></Stroke>
                </Logo>
                <div>
                  <Title><FitText width={210}>Your Triangle</FitText></Title>
                  <Subtitle><FitText width={245}>Visualization with calculated angles</FitText></Subtitle>
                </div>
                <Spacer />
                <BackButton><BackArrow>←</BackArrow><FitText width={110}>Back to Input</FitText></BackButton>
              </CardHeader>
              <Panel>
                <TriangleChart />
              </Panel>
            </Card>
          </PageBody>
        </PageScroll>
        <ScrollTrack>
          <svg width="12" height="9" viewBox="0 0 12 9"><path d="M6 .5 11.500 8.500H.5z" fill="#8b8b8b" stroke="#8b8b8b" strokeLinejoin="round" /></svg>
          <ScrollThumb />
          <svg width="12" height="9" viewBox="0 0 12 9"><path d="M6 8.500.5.5h11z" fill="#8b8b8b" stroke="#8b8b8b" strokeLinejoin="round" /></svg>
        </ScrollTrack>
      </PageFrame>
      <Taskbar />
    </Screen>
  );
}
